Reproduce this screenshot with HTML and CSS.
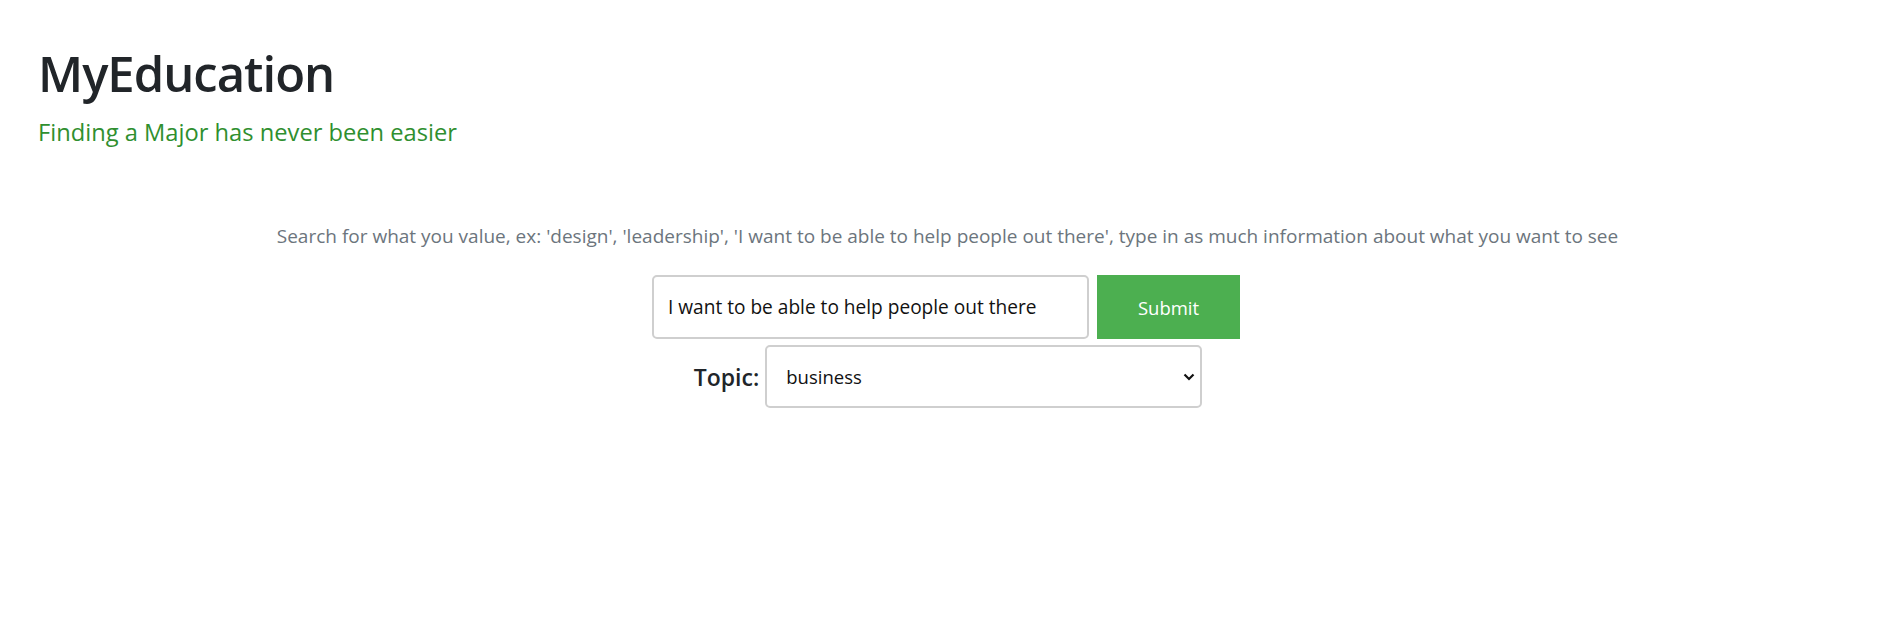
FILE: index.html
```html
<!DOCTYPE html>
<html lang="en">
<head>
    <meta charset="UTF-8">
    <meta name="viewport" content="width=device-width, initial-scale=1.0">
    <title>MyEducation</title>
    <link rel="stylesheet" href="styles.css">
</head>
<body>
    <!-- Header -->
    <header class="header">
        <h1>MyEducation</h1>
        <p class="tagline">Finding a Major has never been easier</p>
    </header>

    <!-- Search -->
    <main class="search">
        <p class="hint">Search for what you value, ex: 'design', 'leadership', 'I want to be able to help people out there', type in as much information about what you want to see</p>

        <form class="search-form" id="searchForm">
            <div class="search-row">
                <input type="text" class="search-input" name="query" value="I want to be able to help people out there">
                <button type="submit" class="btn-submit">Submit</button>
            </div>

            <div class="topic-row">
                <label for="topic" class="topic-label">Topic:</label>
                <div class="select-wrap">
                    <select id="topic" name="topic" class="topic-select">
                        <option value="business" selected>business</option>
                        <option value="science">science</option>
                        <option value="arts">arts</option>
                        <option value="engineering">engineering</option>
                    </select>
                    <svg class="chevron" width="12" height="8" viewBox="0 0 12 8">
                        <path d="M1.5 1.5 L6 6 L10.5 1.5" fill="none" stroke="#111" stroke-width="2.2"/>
                    </svg>
                </div>
            </div>
        </form>
    </main>
</body>
</html>
```

FILE: styles.css
```css
* {
    margin: 0;
    padding: 0;
    box-sizing: border-box;
}

body {
    font-family: 'Open Sans', 'Noto Sans', sans-serif;
    color: #212529;
    background: #fff;
}

.header {
    padding: 43px 38px 0;
}

.header h1 {
    font-size: 49px;
    font-weight: 600;
    line-height: 60px;
    letter-spacing: -1px;
}

.tagline {
    margin-top: 14px;
    font-size: 23.7px;
    line-height: 30px;
    color: #2f8f2f;
}

.search {
    display: flex;
    flex-direction: column;
    align-items: center;
    padding-top: 77px;
}

.hint {
    margin-left: 5px;
    font-size: 19px;
    line-height: 24px;
    color: #6c757d;
}

.search-form {
    display: flex;
    flex-direction: column;
    align-items: center;
    gap: 6px;
    margin-top: 27px;
}

.search-row {
    display: flex;
    gap: 8px;
    margin-left: 2px;
}

.search-input {
    width: 437px;
    height: 64px;
    padding: 0 14px;
    border: 2px solid #cfcfcf;
    border-radius: 5px;
    font-family: inherit;
    font-size: 19.1px;
    color: #111;
}

.btn-submit {
    width: 143px;
    height: 64px;
    border: none;
    background: #4caf50;
    color: #fff;
    font-family: inherit;
    font-size: 18.5px;
    cursor: pointer;
}

.topic-row {
    display: flex;
    align-items: center;
    gap: 6px;
    margin-left: 6px;
}

.topic-label {
    font-size: 23px;
    font-weight: 600;
    color: #212529;
}

.select-wrap {
    position: relative;
}

.topic-select {
    appearance: none;
    -webkit-appearance: none;
    width: 437px;
    height: 63px;
    padding: 0 19px;
    border: 2px solid #cfcfcf;
    border-radius: 5px;
    background: #fff;
    font-family: inherit;
    font-size: 18.5px;
    color: #111;
}

.chevron {
    position: absolute;
    right: 7px;
    top: 28px;
    pointer-events: none;
}
```
